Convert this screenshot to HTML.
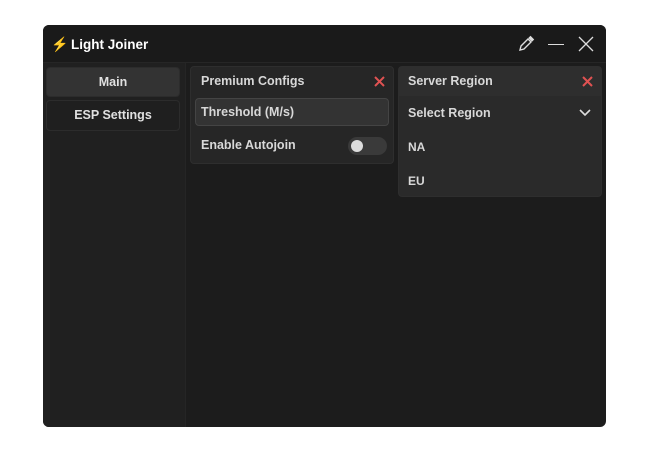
<!DOCTYPE html>
<html><head><style>
*{margin:0;padding:0;box-sizing:border-box}
body{width:661px;height:460px;background:#fff;font-family:"Liberation Sans",sans-serif;font-weight:bold;color:#e6e6e6;position:relative;overflow:hidden}
.win{position:absolute;left:43px;top:25px;width:563px;height:402px;background:#1c1c1c;border-radius:6px;overflow:hidden}
.title{position:absolute;left:0;top:0;width:563px;height:38px;background:#1a1a1a;border-bottom:1px solid #262626}
.side{position:absolute;left:0;top:38px;width:143px;height:364px;background:#202020;border-right:1px solid #252525}
.abs{position:absolute}
.btn{position:absolute;left:3px;width:134px;border-radius:4px;border:1px solid #2c2c2c;text-align:center;font-size:12.5px;color:#e0e0e0}
.panel{position:absolute;background:#262626;border:1px solid #2e2e2e;border-radius:4px}
.t{font-size:12.5px;color:#d8d8d8;position:absolute}
</style></head><body>
<div class="win">
 <div class="title">
  <div class="abs" style="left:8px;top:11px;font-size:14px;color:#f5a623">⚡</div>
  <div class="abs" style="left:28px;top:12px;font-size:13.5px;color:#fff">Light Joiner</div>
  <svg class="abs" style="left:474px;top:10px" width="18" height="18" viewBox="0 0 18 18"><path d="M3 15 L4 11 L11 4 L14 7 L7 14 Z" fill="none" stroke="#ddd" stroke-width="1.4"/><path d="M12 3 L13.5 1.5 L16.5 4.5 L15 6 Z" fill="#ddd" stroke="#ddd"/></svg>
  <div class="abs" style="left:505px;top:19px;width:16px;height:1.2px;background:#ddd"></div>
  <svg class="abs" style="left:535px;top:11px" width="16" height="16" viewBox="0 0 16 16"><path d="M1 1L15 15M15 1L1 15" stroke="#ddd" stroke-width="1.3"/></svg>
 </div>
 <div class="side">
  <div class="btn" style="top:4px;height:30px;line-height:28px;background:#333">Main</div>
  <div class="btn" style="top:37px;height:31px;line-height:29px;background:#1f1f1f">ESP Settings</div>
 </div>
 <div class="panel" style="left:147px;top:41px;width:204px;height:98px">
  <div class="t" style="left:10px;top:7px">Premium Configs</div>
  <svg class="abs" style="left:183px;top:9px" width="11" height="11" viewBox="0 0 11 11"><path d="M1 1L10 10M10 1L1 10" stroke="#e05252" stroke-width="2"/></svg>
  <div class="abs" style="left:4px;top:31px;width:194px;height:28px;background:#333;border:1px solid #444;border-radius:4px"></div>
  <div class="t" style="left:10px;top:38px">Threshold (M/s)</div>
  <div class="t" style="left:10px;top:71px">Enable Autojoin</div>
  <div class="abs" style="left:157px;top:70px;width:39px;height:18px;background:#3a3a3a;border-radius:9px"></div>
  <div class="abs" style="left:160px;top:73px;width:12px;height:12px;background:#ddd;border-radius:50%"></div>
 </div>
 <div class="panel" style="left:355px;top:41px;width:204px;height:131px;background:#2a2a2a">
  <div class="abs" style="left:0;top:0;width:202px;height:29px;background:#2e2e2e"></div>
  <div class="t" style="left:9px;top:7px">Server Region</div>
  <svg class="abs" style="left:183px;top:9px" width="11" height="11" viewBox="0 0 11 11"><path d="M1 1L10 10M10 1L1 10" stroke="#e05252" stroke-width="2"/></svg>
  <div class="t" style="left:9px;top:39px">Select Region</div>
  <svg class="abs" style="left:180px;top:42px" width="12" height="8" viewBox="0 0 12 8"><path d="M1 1L6 6L11 1" fill="none" stroke="#ddd" stroke-width="1.6"/></svg>
  <div class="t" style="left:9px;top:73px;font-size:12px">NA</div>
  <div class="t" style="left:9px;top:107px;font-size:12px">EU</div>
 </div>
</div>
</body></html>
